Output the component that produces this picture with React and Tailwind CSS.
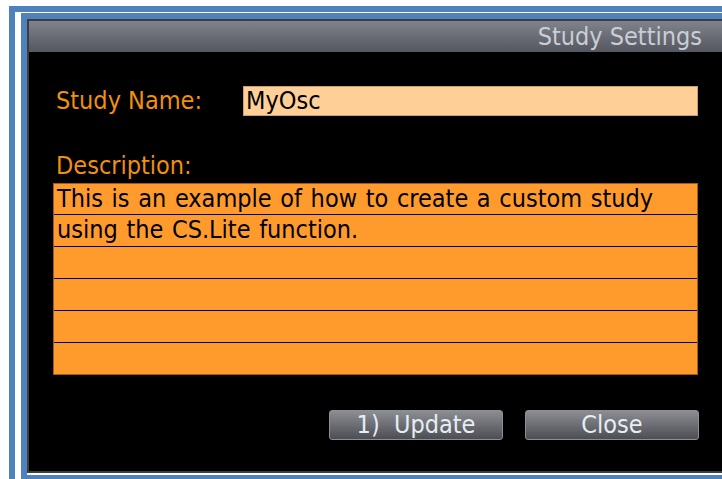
import React from "react";

const FONT = { fontFamily: '"DejaVu Sans Condensed", "DejaVu Sans", sans-serif' };

function DescRow({ children, first }) {
  return (
    <div
      className={
        first
          ? "h-[30px] pl-[3px] text-black leading-[30px] whitespace-nowrap [word-spacing:1.5px]"
          : "h-[32px] border-t border-black pl-[3px] text-black leading-[30px] whitespace-nowrap [word-spacing:1.5px]"
      }
    >
      {children}
    </div>
  );
}

function GlassButton({ children }) {
  return (
    <button
      className="w-[174px] h-[30px] rounded-[3px] border border-[#8e8f94] bg-gradient-to-b from-[#8d8e93] via-[#6d6e73] to-[#4d4e53] text-[#e6edf5] text-[25px] leading-[28px] whitespace-pre"
      style={FONT}
    >
      {children}
    </button>
  );
}

export default function App() {
  return (
    <div className="w-[722px] h-[479px] bg-white overflow-hidden pl-[9px] pt-[6px]">
      <div className="h-full border-l-[6px] border-t-[6px] border-[#4f81bd]">
        <div className="h-full border-l-[6px] border-t border-white">
          <div className="h-full border-l-[6px] border-t-[6px] border-b-[4px] border-[#4f81bd]">
            <div className="h-full border-b-2 border-white">
              <div
                className="h-full border-l-2 border-t-2 border-b-2 border-[#3d3d3f] bg-black flex flex-col text-[25px]"
                style={FONT}
              >
                {/* title bar */}
                <div className="h-[31px] shrink-0 bg-gradient-to-b from-[#80838d] to-[#55575f] flex items-center justify-end pr-[20px]">
                  <span className="text-[#c9ced6] leading-[31px]">Study Settings</span>
                </div>

                <div className="flex-1 flex flex-col pl-[24px] pr-[24px]">
                  {/* name row */}
                  <div className="mt-[34px] h-[30px] flex items-center">
                    <div className="w-[190px] pl-[3px] text-[#f0900c] leading-[30px]">Study Name:</div>
                    <div className="flex-1 h-[30px] bg-[#ffcf98] border border-[#c9a070] pl-[2px] text-black leading-[28px]">
                      MyOsc
                    </div>
                  </div>

                  {/* description */}
                  <div className="mt-[35px] h-[32px] pl-[3px] text-[#f0900c] leading-[30px]">Description:</div>
                  <div className="border border-[#a65a12] bg-[#fe9b2c] flex flex-col">
                    <DescRow first>This is an example of how to create a custom study</DescRow>
                    <DescRow>using the CS.Lite function.</DescRow>
                    <DescRow />
                    <DescRow />
                    <DescRow />
                    <DescRow />
                  </div>

                  {/* actions */}
                  <div className="mt-[35px] flex justify-end gap-[22px] mr-[-1px]">
                    <GlassButton>{"1)  Update"}</GlassButton>
                    <GlassButton>Close</GlassButton>
                  </div>
                </div>
              </div>
            </div>
          </div>
        </div>
      </div>
    </div>
  );
}
